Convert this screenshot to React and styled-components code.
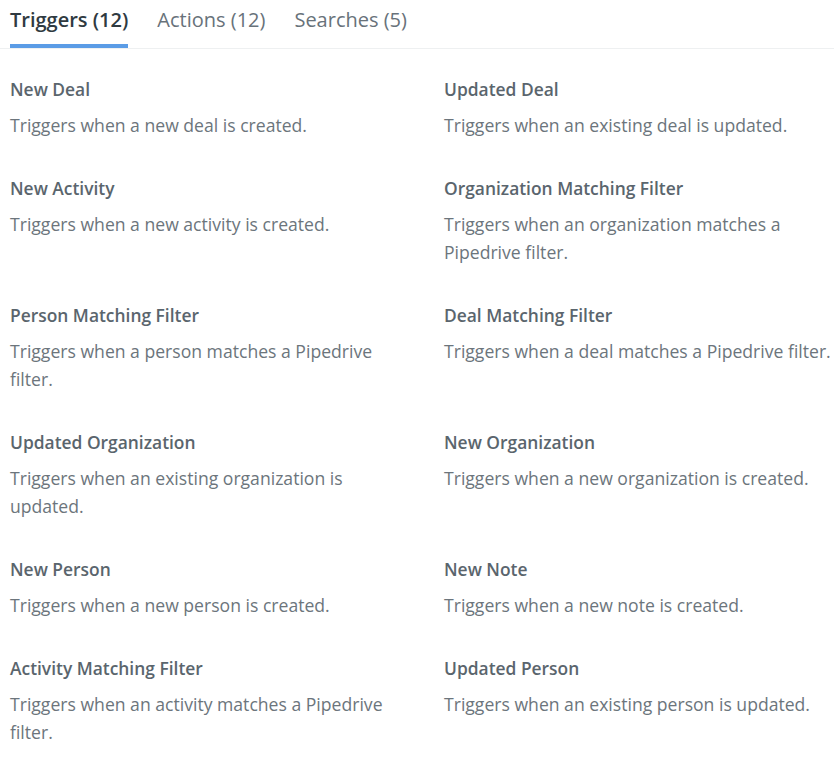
import React from 'react';
import styled, { createGlobalStyle } from 'styled-components';

const GlobalStyle = createGlobalStyle`
    body {
        margin: 0;
        background: #ffffff;
        font-family: "Open Sans", "Liberation Sans", sans-serif;
    }
`;

const Page = styled.div`
    width: 834px;
    height: 760px;
    overflow: hidden;
`;

const TabBar = styled.div`
    display: flex;
    gap: 29px;
    padding: 8px 10px 0;
    border-bottom: 1px solid #eef0f1;
`;

const Tab = styled.div`
    font-size: 20px;
    line-height: 24px;
    font-weight: ${props => props.active ? 600 : 400};
    color: ${props => props.active ? '#2f3a41' : '#68727a'};
    padding-bottom: 12px;
    border-bottom: 4px solid ${props => props.active ? '#5b9ce6' : 'transparent'};
    cursor: pointer;
`;

const Grid = styled.div`
    display: grid;
    grid-template-columns: 400px 390px;
    column-gap: 34px;
    row-gap: 37px;
    padding: 28px 10px 0;
`;

const Item = styled.div`
    display: flex;
    flex-direction: column;
`;

const Title = styled.div`
    font-size: 17.4px;
    line-height: 24px;
    font-weight: 600;
    color: #5a656d;
    margin-bottom: 10px;
`;

const Desc = styled.div`
    font-size: 17.6px;
    line-height: 28px;
    color: #6c757c;
`;

const tabs = [
    { label: 'Triggers (12)', active: true },
    { label: 'Actions (12)' },
    { label: 'Searches (5)' },
];

const triggers = [
    ['New Deal', 'Triggers when a new deal is created.'],
    ['Updated Deal', 'Triggers when an existing deal is updated.'],
    ['New Activity', 'Triggers when a new activity is created.'],
    ['Organization Matching Filter', 'Triggers when an organization matches a Pipedrive filter.'],
    ['Person Matching Filter', 'Triggers when a person matches a Pipedrive filter.'],
    ['Deal Matching Filter', 'Triggers when a deal matches a Pipedrive filter.'],
    ['Updated Organization', 'Triggers when an existing organization is updated.'],
    ['New Organization', 'Triggers when a new organization is created.'],
    ['New Person', 'Triggers when a new person is created.'],
    ['New Note', 'Triggers when a new note is created.'],
    ['Activity Matching Filter', 'Triggers when an activity matches a Pipedrive filter.'],
    ['Updated Person', 'Triggers when an existing person is updated.'],
];

export default function App() {
    return (
        <Page>
            <GlobalStyle />
            <TabBar>
                {tabs.map(t => (
                    <Tab key={t.label} active={t.active}>{t.label}</Tab>
                ))}
            </TabBar>
            <Grid>
                {triggers.map(([title, desc]) => (
                    <Item key={title}>
                        <Title>{title}</Title>
                        <Desc>{desc}</Desc>
                    </Item>
                ))}
            </Grid>
        </Page>
    );
}
